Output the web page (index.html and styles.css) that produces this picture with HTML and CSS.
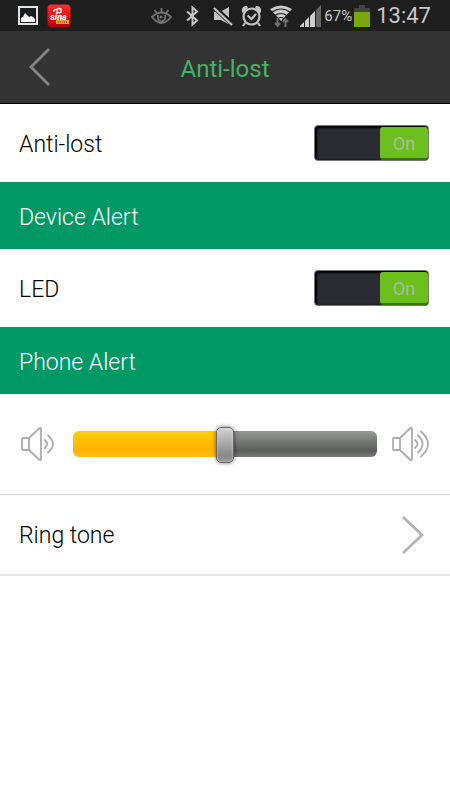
FILE: index.html
```html
<!DOCTYPE html>
<html lang="en">
<head>
<meta charset="utf-8">
<meta name="viewport" content="width=device-width, initial-scale=1">
<title>Anti-lost</title>
<link rel="stylesheet" href="styles.css">
</head>
<body>
<div class="status">
  <div class="status-left">
    <svg width="20" height="19" viewBox="0 0 20 19" aria-hidden="true">
      <rect x="1" y="1" width="18" height="17" fill="#1a1c20" stroke="#e4e4e4" stroke-width="2"/>
      <path d="M3 16v-4l2-1 2-4 2 2 2 2 2-1 2 1 2 2v3z" fill="#fff"/>
    </svg>
    <svg width="24" height="24" viewBox="0 0 24 24" aria-hidden="true">
      <defs><linearGradient id="red" x2="0" y2="1"><stop stop-color="#f83030"/><stop offset=".5" stop-color="#ee1018"/><stop offset="1" stop-color="#ad0008"/></linearGradient></defs>
      <rect x=".5" y=".5" width="23" height="23" rx="4" fill="url(#red)"/>
      <path d="M7 8c-1-2 1-3 3-2 0-2 4-2 4 0 1 1 0 3-2 3" fill="none" stroke="#fff" stroke-width="1.400"/>
      <circle cx="10.500" cy="8.500" r="1.300" fill="#fff"/>
      <text x="11.500" y="16" class="logo-name">sina</text>
      <rect x="9" y="16" width="13" height="4" fill="#eda712"/>
      <path d="M11 18h9" stroke="#a84b00" stroke-width="1.500" stroke-dasharray="1 1"/>
    </svg>
  </div>
  <div class="status-right">
    <svg class="spaced" width="21" height="24" viewBox="0 0 21 24" fill="none" stroke="#747474" stroke-width="1.800" aria-hidden="true">
      <path d="M1 13q9.500-9 19 0q-9.500 12-19 0z"/><path d="M10.500 8V4M6 9 3.500 6M15 9l2.500-3"/><path d="M7 11q-1 6 3.500 6.500Q15 17 14 11"/><circle cx="10" cy="13" r="1.500" fill="#747474" stroke="none"/>
    </svg>
    <svg class="spaced" width="13" height="24" viewBox="0 0 13 24" fill="none" stroke="#c4c4c4" stroke-width="2" aria-hidden="true">
      <path d="M1 7.500 11 16.500 6.500 20.500V3.500L11 7.500 1 16.500"/>
    </svg>
    <svg width="20" height="24" viewBox="0 0 20 24" fill="#c2c2c2" aria-hidden="true">
      <path d="M7 8l9-5v13zM1 8h2l12 11v1l-7-4H1z"/><path d="M1 3l18 17" stroke="#1e1e1e" stroke-width="5"/><path d="M1 4l18 17" stroke="#c2c2c2" stroke-width="2.200"/>
    </svg>
    <svg width="21" height="24" viewBox="0 0 21 24" fill="none" stroke="#c4c4c4" stroke-width="2.200" aria-hidden="true">
      <circle cx="10.500" cy="12.500" r="8"/><path d="M4 19l-2 3M17 19l2 3M6.500 11.500l4 3.500 4.500-5"/>
      <path d="M1 8Q0 2 6 2l1 2-5 5zM20 8Q21 2 15 2l-1 2 5 5z" fill="#c4c4c4" stroke="none"/>
    </svg>
    <svg width="22" height="24" viewBox="0 0 22 24" aria-hidden="true">
      <path d="M0 5q11-7 22 0L11 17z" fill="#cacaca"/>
      <path d="M2 8q9-6 18 0M5 11.500q6-4 12 0M8 14.500q3-2 6 0" fill="none" stroke="#1e1e1e" stroke-width="1.200"/>
      <path d="M7.500 14v7M15.500 23v-7M5 19l2.500 3 2.500-3M13 18l2.500-3 2.500 3" fill="none" stroke="#6f6f6f" stroke-width="2"/>
    </svg>
    <svg width="22" height="24" viewBox="0 0 22 24" fill="#cfcfcf" aria-hidden="true">
      <path d="M0 23v-1l4-4v5zM5 23v-6l4-4v10zM10 23V12l5-5v16z"/><path d="M16 23V6l5-5v22z" fill="#666"/>
    </svg>
    <span class="percent">67%</span>
    <svg width="16" height="24" viewBox="0 0 16 24" aria-hidden="true">
      <path d="M5 1h6v3h5v4H0V4h5z" fill="#444"/><path d="M0 8h16v15H0z" fill="#78a80a"/>
    </svg>
    <time class="clock">13:47</time>
  </div>
</div>
<header class="header">
  <button class="back" type="button" aria-label="Back">
    <svg width="22" height="38" viewBox="0 0 22 38" fill="none" stroke="#858585" stroke-width="2.800" aria-hidden="true"><path d="M20 1 2 19l18 18"/></svg>
  </button>
  <h1 class="title">Anti-lost</h1>
</header>
<main>
  <div class="row">
    <span class="label" id="anti-label">Anti-lost</span>
    <button class="switch" type="button" role="switch" aria-checked="true" aria-labelledby="anti-label"><span class="knob">On</span></button>
  </div>
  <h2 class="section">Device Alert</h2>
  <div class="row">
    <span class="label" id="led-label">LED</span>
    <button class="switch" type="button" role="switch" aria-checked="true" aria-labelledby="led-label"><span class="knob">On</span></button>
  </div>
  <h2 class="section">Phone Alert</h2>
  <div class="volume">
    <svg width="34" height="34" viewBox="0 0 34 34" fill="none" stroke="#acacac" stroke-width="1.800" stroke-linejoin="round" stroke-linecap="round" aria-hidden="true">
      <path d="M8 11v12M2 11h6L18 1.500q2-1.500 2 1v29q0 2.500-2 1L8 23H2q-1 0-1-1V12q0-1 1-1zM24 13q4 4 0 8M27 8.500q10 8.500 0 17"/>
    </svg>
    <input class="slider" type="range" min="0" max="100" value="50" aria-label="Volume">
    <svg width="38" height="34" viewBox="0 0 38 34" fill="none" stroke="#acacac" stroke-width="1.800" stroke-linejoin="round" stroke-linecap="round" aria-hidden="true">
      <path d="M8 11v12M2 11h6L18 1.500q2-1.500 2 1v29q0 2.500-2 1L8 23H2q-1 0-1-1V12q0-1 1-1zM23 13q5 4 0 8M26 8.500q9 8.500 0 17M29 4.500q14 12.500 0 25"/>
    </svg>
  </div>
  <a class="row ring" href="#ring-tone">
    <span class="label">Ring tone</span>
    <svg class="chevron" width="22" height="38" viewBox="0 0 22 38" fill="none" stroke="#b3b3b3" stroke-width="2.800" aria-hidden="true"><path d="M1 1l19 18L1 37"/></svg>
  </a>
</main>
</body>
</html>
```
FILE: styles.css
```css
* {
  box-sizing: border-box;
}

body {
  margin: 0;
  background: #fff;
  color: #000;
  font: 23px/28px Roboto, sans-serif;
}

svg {
  display: block;
  flex: none;
}

.status {
  display: flex;
  justify-content: space-between;
  height: 31px;
  padding: 0 19px 0 18px;
  background: #1e1e1e;
  color: #c8c8c8;
}

.status-left,
.status-right {
  display: flex;
  align-items: center;
  gap: 9px;
}

.status-right {
  gap: 8px;
}

.spaced {
  margin-right: 6px;
}

.logo-name {
  font: italic 900 9px Roboto, sans-serif;
  fill: #fff;
  text-anchor: middle;
}

.percent {
  margin: 0 -6px;
  font-size: 15px;
}

.clock {
  margin-left: -2px;
  font-size: 22px;
}

.header {
  display: grid;
  grid-template-columns: 60px 1fr 60px;
  align-items: center;
  height: 73px;
  border-bottom: 1px solid #000;
  background: #333;
}

.back {
  padding: 0 0 0 29px;
  border: 0;
  background: none;
}

.title {
  margin: 0;
  padding-top: 4px;
  color: #43b367;
  font-size: 24px;
  font-weight: 400;
  text-align: center;
}

.row {
  display: flex;
  align-items: center;
  justify-content: space-between;
  min-height: 78px;
  padding: 0 21px 0 19px;
}

.label {
  padding-top: 3px;
  font-weight: 300;
}

.section {
  margin: 0;
  padding: 22px 19px 17px;
  background: #009966;
  color: #fff;
  font-size: 23px;
  font-weight: 300;
}

.switch {
  display: flex;
  justify-content: flex-end;
  width: 115px;
  height: 36px;
  padding: 1px 0 0;
  border: 1px solid #777;
  border-radius: 4px;
  background: #2b2c32;
  box-shadow: inset 1px 1px 2px 1px #000;
}

.knob {
  width: 48px;
  border-bottom: 2px solid #397600;
  border-radius: 3px;
  background: #6cbf1c;
  color: #afbba5;
  font: 18px/33px Roboto, sans-serif;
  text-align: center;
}

.volume {
  display: flex;
  align-items: center;
  height: 101px;
  padding: 0 20px 0 21px;
  border-bottom: 1px solid #d9d9d9;
}

.slider {
  flex: 1;
  min-width: 0;
  height: 36px;
  margin: 0 15px 0 18px;
  appearance: none;
  background: none;
}

.slider::-webkit-slider-runnable-track {
  height: 26px;
  border-radius: 6px;
  background:
    linear-gradient(#ffcf00, #ffb300 70%, #ffbd16) 0 / 50% 100% no-repeat,
    linear-gradient(#969896, #5b5d5a 75%, #777976);
}

.slider::-webkit-slider-thumb {
  width: 18px;
  height: 36px;
  margin-top: -4px;
  border: 1px solid #666;
  border-radius: 5px;
  appearance: none;
  background: linear-gradient(#d2d2d2, #888 80%, #999);
  box-shadow: inset 0 0 2px #eee, 0 0 4px #0008;
}

.ring {
  min-height: 81px;
  border-bottom: 2px solid #e8e8e8;
  color: inherit;
  text-decoration: none;
}

.chevron {
  margin-right: 5px;
}
```
